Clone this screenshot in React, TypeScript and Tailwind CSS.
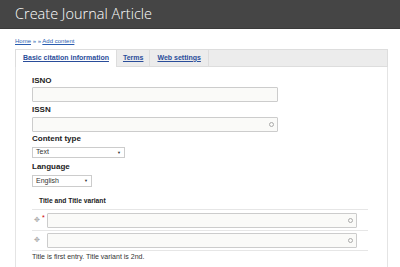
import React from 'react';

const inputCls = 'h-[15px] border border-[#ccc] bg-[#fafaf8] rounded-[1px]';

const Circle = () => (
  <span className="ml-auto mr-[3px] inline-block h-[5px] w-[5px] rounded-full border border-[#aaa]" />
);

export default function App() {
  return (
    <div className="w-[400px] h-[267px] overflow-hidden bg-white font-['Liberation_Sans',Arial,sans-serif] text-[#333]">
      <div className="h-[29px] bg-[#454545] border-b border-[#3a3a3a] pl-[15px] pt-[4px]">
        <h1 className="font-['Open_Sans',sans-serif] font-light text-[14.5px] leading-[20px] text-white">
          Create Journal Article
        </h1>
      </div>

      <div className="px-[15px] pt-[8px] text-[6px] leading-[8px] text-[#2a5db0]">
        <a className="underline">Home</a> » » <a className="underline">Add content</a>
      </div>

      <div className="ml-[15px] mt-[4px] mr-[12px]">
        <div className="flex h-[18px] border border-[#ddd] bg-[#ececec] text-[7px] font-bold text-[#2a4d9a]">
          <div className="flex items-center px-[7px] bg-white border-r border-[#ddd] -mb-px">
            <span className="underline">Basic citation information</span>
          </div>
          <div className="flex items-center px-[6px] border-r border-[#ddd]">
            <span className="underline">Terms</span>
          </div>
          <div className="flex items-center px-[7px] border-r border-[#ddd]">
            <span className="underline">Web settings</span>
          </div>
        </div>

        <div className="border-x border-[#e4e4e4] pl-[16px] pt-[9px] pb-[20px]">
          <div className="text-[8px] font-bold text-[#222] leading-[10px]">ISNO</div>
          <div className={`${inputCls} w-[246px] mt-[1px]`} />

          <div className="text-[8px] font-bold text-[#222] leading-[10px] mt-[3px]">ISSN</div>
          <div className={`${inputCls} w-[246px] mt-[2px] flex items-center`}>
            <Circle />
          </div>

          <div className="text-[8px] font-bold text-[#222] leading-[10px] mt-[2px]">Content type</div>
          <div className="mt-[3px] flex h-[11px] w-[93px] items-center border border-[#ccc] px-[3px] text-[7px] text-[#333]">
            Text
            <span className="ml-auto text-[4px]">▼</span>
          </div>

          <div className="text-[8px] font-bold text-[#222] leading-[10px] mt-[4px]">Language</div>
          <div className="mt-[3px] flex h-[12px] w-[60px] items-center border border-[#ccc] px-[3px] text-[7px] text-[#333]">
            English
            <span className="ml-auto text-[4px]">▼</span>
          </div>

          <div className="mt-[10px] pl-[7px] text-[6.7px] font-bold text-[#222] leading-[8px]">Title and Title variant</div>

          <div className="mt-[4px] w-[336px] border-t border-[#e6e6e6]">
            <div className="flex items-center h-[21px] border-b border-[#e6e6e6]">
              <span className="w-[10px] pl-[2px] text-[7px] text-[#aaa]">✥</span>
              <span className="w-[5px] text-[7px] text-[#c00] -mt-[4px]">*</span>
              <div className={`${inputCls} w-[310px] flex items-center`}>
                <Circle />
              </div>
            </div>
            <div className="flex items-center h-[20px] border-b border-[#e6e6e6]">
              <span className="w-[15px] pl-[2px] text-[7px] text-[#aaa]">✥</span>
              <div className={`${inputCls} w-[310px] flex items-center`}>
                <Circle />
              </div>
            </div>
          </div>

          <div className="mt-[2px] text-[7px] text-[#333] leading-[8px]">
            Title is first entry. Title variant is 2nd.
          </div>
        </div>
      </div>
    </div>
  );
}
